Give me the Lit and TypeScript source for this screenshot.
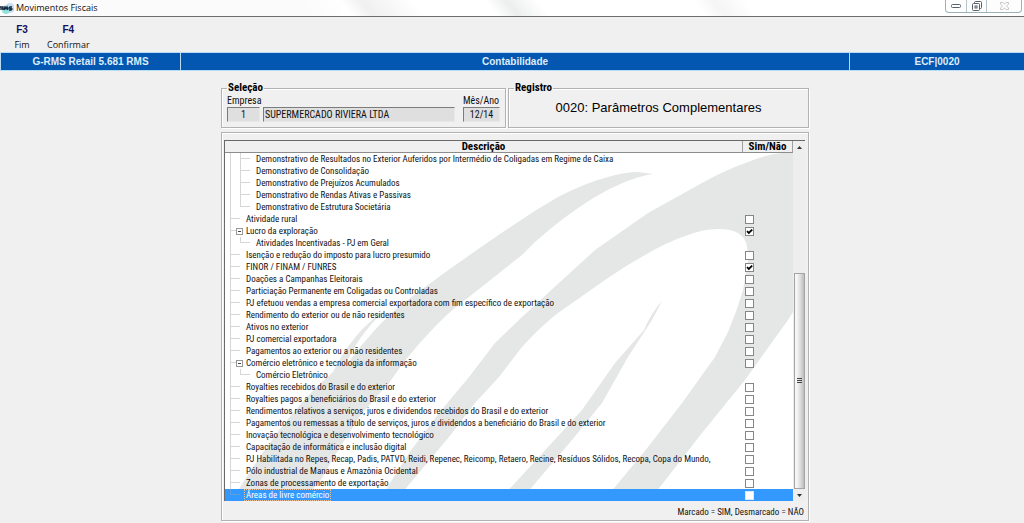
import { LitElement, html, css, svg, nothing } from "lit";
import { customElement, state } from "lit/decorators.js";
import { classMap } from "lit/directives/class-map.js";

interface Row {
  text: string;
  level: 1 | 2;
  checked?: boolean;
  open?: boolean;
  last?: boolean;
  selected?: boolean;
}

const item = (text: string, extra: Partial<Row> = {}): Row => ({ text, level: 1, checked: false, ...extra });
const child = (text: string, last = false): Row => ({ text, level: 2, last });

const ROWS: Row[] = [
  child("Demonstrativo de Resultados no Exterior Auferidos por Intermédio de Coligadas em Regime de Caixa"),
  child("Demonstrativo de Consolidação"),
  child("Demonstrativo de Prejuízos Acumulados"),
  child("Demonstrativo de Rendas Ativas e Passivas"),
  child("Demonstrativo de Estrutura Societária", true),
  item("Atividade rural"),
  item("Lucro da exploração", { open: true, checked: true }),
  child("Atividades Incentivadas - PJ em Geral", true),
  item("Isenção e redução do imposto para lucro presumido"),
  item("FINOR / FINAM / FUNRES", { checked: true }),
  item("Doações a Campanhas Eleitorais"),
  item("Particiação Permanente em Coligadas ou Controladas"),
  item("PJ efetuou vendas a empresa comercial exportadora com fim específico de exportação"),
  item("Rendimento do exterior ou de não residentes"),
  item("Ativos no exterior"),
  item("PJ comercial exportadora"),
  item("Pagamentos ao exterior ou a não residentes"),
  item("Comércio eletrônico e tecnologia da informação", { open: true }),
  child("Comércio Eletrônico", true),
  item("Royalties recebidos do Brasil e do exterior"),
  item("Royalties pagos a beneficiários do Brasil e do exterior"),
  item("Rendimentos relativos a serviços, juros e dividendos recebidos do Brasil e do exterior"),
  item("Pagamentos ou remessas a título de serviços, juros e dividendos a beneficiário do Brasil e do exterior"),
  item("Inovação tecnológica e desenvolvimento tecnológico"),
  item("Capacitação de informática e inclusão digital"),
  item("PJ Habilitada no Repes, Recap, Padis, PATVD, Reidi, Repenec, Reicomp, Retaero, Recine, Resíduos Sólidos, Recopa, Copa do Mundo,"),
  item("Pólo industrial de Manaus e Amazônia Ocidental"),
  item("Zonas de processamento de exportação"),
  item("Áreas de livre comércio", { selected: true, last: true }),
];

const watermark = svg`
  <path d="M653 174L638 172Q625 172 608 177Q585 183 558 197Q535 210 515 224C485 244 430 282 395 310C375 328 357 350 345 367
    C352 348 366 328 384 311C363 325 345 347 333 372C295 405 262 450 232 501H302Q308 493 319 483Q326 472 332 460Q346 438 362 413
    L389 383Q408 355 429 333Q448 312 469 297L522 255L535 242Q564 216 595 197Q610 188 625 182Q640 176 653 174Z"/>
  <path d="M793 153H782Q764 155 748 162Q725 170 702 183L648 213L595 250L548 293L522 317L495 343L469 377L439 413L409 453L390 483L380 501
    H397L407 487L449 437L475 403L499 377L522 347Q540 327 558 313L605 280Q625 266 645 255Q667 242 688 235Q703 229 718 229Q731 229 738 233
    Q746 238 747 247Q749 257 747 267L743 290Q737 311 728 332L715 357L682 403L648 447L615 487L602 501H648L660 487L702 433L745 380L788 320L793 312Z"/>
  <path d="M662 301Q651 313 644 330L615 363L582 410L548 447L515 483L498 501H520L532 487L572 440L602 403L628 357L652 320Z"/>`;

@customElement("app-root")
export class AppRoot extends LitElement {
  @state() private rows: Row[] = ROWS;

  static styles = css`
    :host {
      display: block;
      min-height: 100vh;
      box-sizing: border-box;
      background: #f0f0f0;
      color: #111;
      font: 10px/12px "Roboto Condensed", Roboto, "Liberation Sans", sans-serif;
    }
    button, input { font: inherit; color: inherit; }
    button { border: 0; padding: 0; margin: 0; background: none; display: block; }

    .title {
      display: flex;
      justify-content: space-between;
      height: 16px;
      border-bottom: 1px solid #6e6e6e;
      background: linear-gradient(50deg, #fbfbfb 30%, #ffffff 34%, #f0f0f0 36%, #fff 41%, #fff 48%, #eceeee 50%, #fff 53%, #fff 68%, #f5f5f5 70%, #fff 73%);
    }
    .name { display: flex; align-items: center; gap: 2px; font: 400 9px/16px "Open Sans", "Noto Sans", sans-serif; margin: 0; }
    .logo { width: 14px; height: 14px; }
    .window {
      display: flex;
      height: 13px;
      margin-right: 2px;
      border: 1px solid #9bb3b6;
      border-top: 0;
      border-radius: 0 0 4px 4px;
      box-sizing: border-box;
      background: #fdfdfd;
    }
    .window button { width: 20px; display: grid; place-items: center; }
    .window button + button { border-left: 1px solid #b4c6c8; }
    .window .close { width: 35px; }

    .menu { display: flex; padding: 5px 5px 0; gap: 8px; height: 30px; }
    .menu button { text-align: center; min-width: 34px; font: 9px/15px "Open Sans", "Noto Sans", sans-serif; }
    .menu b { display: block; font: 700 10px/15px "Liberation Sans", sans-serif; color: #12125c; }

    .banner {
      display: grid;
      grid-template-columns: 179px 1fr 175px;
      border: 1px solid #b9dcf5;
      border-right: 0;
      background: #0457b0;
      color: #dcecfb;
      font: 700 10px/17px "Liberation Sans", sans-serif;
      text-align: center;
    }
    .banner span + span { border-left: 1px solid #b9dcf5; }

    main { max-width: 588px; margin: 0 auto; padding: 11px 0 0 6px; }
    .top { display: grid; grid-template-columns: 285px 1fr; gap: 2px; }
    fieldset {
      margin: 0;
      padding: 0 5px;
      border: 1px solid #b2b2b2;
      box-shadow: inset 1px 1px #fff, 1px 1px #fff;
      min-width: 0;
      height: 46px;
      box-sizing: border-box;
    }
    legend { padding: 0 1px; font-size: 11px; line-height: 12px; font-weight: 700; color: #000; }
    .fields { display: grid; grid-template-columns: 33px 1fr 37px; column-gap: 3px; }
    .fields label { line-height: 13px; white-space: nowrap; }
    .fields .month { grid-column: 3; }
    .fields input {
      min-width: 0;
      width: 100%;
      box-sizing: border-box;
      height: 15px;
      padding: 0 1px;
      border: 1px solid;
      border-color: #7c7c7c #e8e8e8 #e8e8e8 #7c7c7c;
      border-radius: 0;
      background: #dfdfdf;
      text-align: center;
    }
    .fields .company { text-align: left; }
    .company-cell { padding-right: 5px; }
    .record { margin: 0; padding-top: 4px; font: 400 13px/20px "Liberation Sans", sans-serif; text-align: center; color: #000; }

    .panel {
      margin-top: 4px;
      padding: 7px 3px 0 2px;
      border: 1px solid #b2b2b2;
      box-shadow: inset 1px 1px #fff, 1px 1px #fff;
    }
    .list {
      display: grid;
      grid-template-columns: minmax(0, 1fr) 12px;
      border-top: 1px solid #696969;
      border-left: 1px solid #696969;
    }
    .sheet { position: relative; background: #fff; z-index: 0; overflow: hidden; }
    .mark { position: absolute; z-index: -1; inset: 12px 0 0; width: 100%; height: calc(100% - 12px); fill: #e5e7e7; }
    table { width: 100%; border-collapse: separate; border-spacing: 0; table-layout: fixed; }
    .col-check { width: 50px; }
    th {
      height: 11px;
      padding: 0;
      background: #f0f0f0;
      border-bottom: 1px solid #8c8c8c;
      border-right: 1px solid #a0a0a0;
      font-size: 11px;
      font-weight: 700;
      line-height: 11px;
      color: #000;
    }
    td { height: 12px; padding: 0; line-height: 12px; font-size: 9px; white-space: nowrap; }
    .node { display: flex; height: 12px; padding-left: 5px; }
    .rail, .branch { flex: none; width: 10px; height: 12px; box-sizing: border-box; }
    .branch { display: grid; grid-template-columns: 1px 1fr; margin-right: 5px; }
    .branch::before { content: ""; background: #d6d6d6; }
    .branch::after { content: ""; height: 1px; margin-top: 5px; background: #d6d6d6; }
    .branch.last::before { height: 6px; }
    .rail { border-left: 1px solid #d6d6d6; }
    .toggle {
      flex: none;
      align-self: center;
      width: 7px;
      height: 7px;
      box-sizing: border-box;
      margin: 0 2px 0 -9px;
      border: 1px solid #989898;
      background: linear-gradient(#444, #444) center / 3px 1px no-repeat #fff;
    }
    .label { padding: 0 1px; }
    .selected td { background: #3399ff; color: #fff; }
    .selected .label { line-height: 10px; margin: 0 0 0 -1px; border: 1px dotted #f0c090; }
    .selected .branch::before, .selected .branch::after { background: #5f9fdd; }
    .tick input {
      appearance: none;
      display: block;
      width: 9px;
      height: 9px;
      margin: 0 0 0 2px;
      box-sizing: border-box;
      border: 1px solid #868686;
      background: #fff no-repeat center;
    }
    .tick input:checked {
      background-image: url("data:image/svg+xml,%3Csvg xmlns='http://www.w3.org/2000/svg' viewBox='0 0 7 7'%3E%3Cpath d='M1 3.2L2.8 5L6.2 1.6' fill='none' stroke='%23000' stroke-width='1.8'/%3E%3C/svg%3E");
    }
    .selected .tick input { border-color: #d8e8f8; }

    .scroll {
      display: grid;
      grid-template-rows: 12px 120fr 215fr 12px;
      padding-left: 1px;
      background: #eeeeee;
    }
    .scroll button { display: grid; place-items: center; }
    .scroll .down { grid-row: 4; }
    .thumb {
      grid-row: 3;
      display: grid;
      place-items: center;
      border: 1px solid #a4a4a4;
      background: linear-gradient(90deg, #f6f6f6 20%, #dcdcdc 60%, #bdbdbd);
    }
    .note { margin: 0; padding: 5px 1px 2px; font-size: 9px; text-align: right; }
  `;

  private toggle(index: number) {
    this.rows = this.rows.map((r, i) => (i === index ? { ...r, checked: !r.checked } : r));
  }

  private renderRow(row: Row, i: number) {
    return html`<tr class=${classMap({ selected: !!row.selected })}>
      <td>
        <div class="node">
          ${row.level === 2 ? html`<span class="rail"></span>` : nothing}
          <span class=${classMap({ branch: true, last: !!row.last })}></span>
          ${row.open ? html`<button class="toggle" aria-label="Recolher ${row.text}"></button>` : nothing}
          ${row.level === 1
            ? html`<label class="label" for="row-${i}">${row.text}</label>`
            : html`<span class="label">${row.text}</span>`}
        </div>
      </td>
      <td class="tick">
        ${row.level === 1
          ? html`<input id="row-${i}" type="checkbox" .checked=${!!row.checked} @change=${() => this.toggle(i)} />`
          : nothing}
      </td>
    </tr>`;
  }

  render() {
    return html`
      <header class="title">
        <h1 class="name">
          <svg class="logo" viewBox="0 0 14 14" aria-hidden="true">
            <circle cx="10" cy="7" r="5" fill="#c9dcf2" />
            <circle cx="6" cy="9" r="4" fill="#8fe3dc" />
            <path d="M0 9V6H3V8H1M4 9L5 6L6 8L7 6L8 9M12 6H10L9 7L12 8L11 9H9" fill="none" stroke="#12203c" stroke-width="1.3" />
          </svg>
          Movimentos Fiscais
        </h1>
        <div class="window">
          <button aria-label="Minimizar">
            <svg width="10" height="6"><rect x=".5" y="1.5" width="9" height="3" rx="1" fill="#fff" stroke="#59606a" /></svg>
          </button>
          <button aria-label="Restaurar">
            <svg width="10" height="10" fill="#fff" stroke="#59606a">
              <rect x="2.5" y=".5" width="7" height="7" rx="1" /><rect x=".5" y="2.5" width="7" height="7" rx="1" /><rect x="3" y="5" width="2" height="2" />
            </svg>
          </button>
          <button class="close" aria-label="Fechar">
            <svg width="9" height="8" fill="#fff" stroke="#c6c6c6">
              <path d="M.5 .5H3L4.500 2.300L6 .5H8.500V2L6.500 4L8.500 6V7.500H6L4.500 5.700L3 7.500H.5V6L2.500 4L.5 2Z" />
            </svg>
          </button>
        </div>
      </header>
      <nav class="menu">
        <button><b>F3</b>Fim</button>
        <button><b>F4</b>Confirmar</button>
      </nav>
      <div class="banner"><span>G-RMS Retail 5.681 RMS</span><span>Contabilidade</span><span>ECF|0020</span></div>
      <main>
        <div class="top">
          <fieldset>
            <legend>Seleção</legend>
            <div class="fields">
              <label for="company">Empresa</label>
              <label class="month" for="month">Mês/Ano</label>
              <input id="company" readonly value="1" />
              <div class="company-cell"><input class="company" aria-label="Nome da empresa" readonly value="SUPERMERCADO RIVIERA LTDA" /></div>
              <input id="month" readonly value="12/14" />
            </div>
          </fieldset>
          <fieldset>
            <legend>Registro</legend>
            <p class="record">0020: Parâmetros Complementares</p>
          </fieldset>
        </div>
        <section class="panel">
          <div class="list">
            <div class="sheet">
              <svg class="mark" viewBox="225 153 568 348" preserveAspectRatio="xMaxYMin slice" aria-hidden="true">${watermark}</svg>
              <table>
                <colgroup><col /><col class="col-check" /></colgroup>
                <thead><tr><th>Descrição</th><th>Sim/Não</th></tr></thead>
                <tbody>${this.rows.map((r, i) => this.renderRow(r, i))}</tbody>
              </table>
            </div>
            <div class="scroll">
              <button aria-label="Rolar para cima"><svg width="5" height="3"><path d="M0 3L2.500 0L5 3Z" fill="#333" /></svg></button>
              <div class="thumb"><svg width="5" height="6" stroke="#444"><path d="M0 .5H5M0 2.500H5M0 4.500H5" /></svg></div>
              <button class="down" aria-label="Rolar para baixo"><svg width="5" height="3"><path d="M0 0L2.500 3L5 0Z" fill="#333" /></svg></button>
            </div>
          </div>
          <p class="note">Marcado = SIM, Desmarcado = NÃO</p>
        </section>
      </main>
    `;
  }
}
